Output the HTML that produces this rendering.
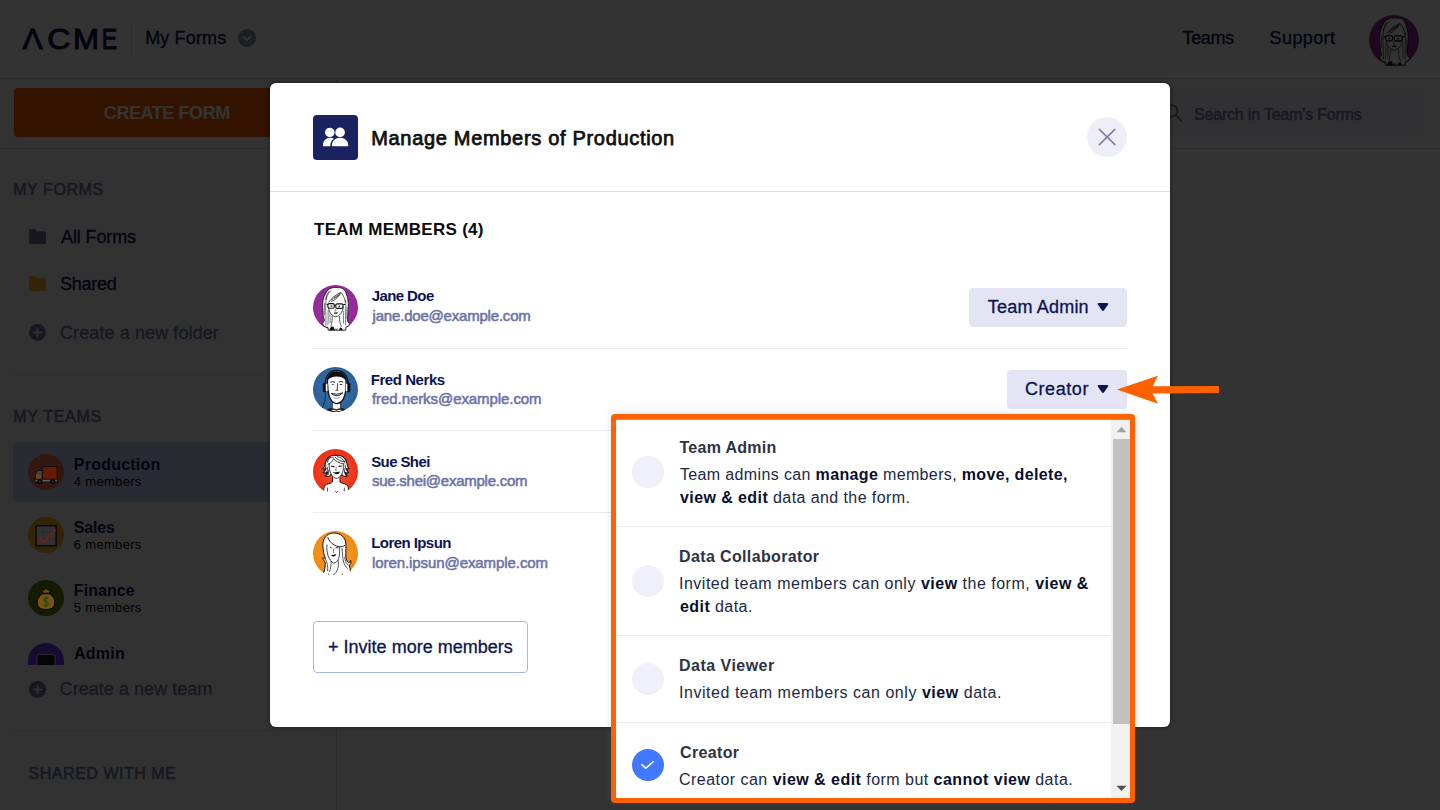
<!DOCTYPE html>
<html lang="en">
<head>
<meta charset="utf-8">
<title>Manage Members of Production</title>
<style>
*{box-sizing:border-box;margin:0;padding:0}
html,body{width:1440px;height:810px;overflow:hidden;background:#fff}
body{font-family:"Liberation Sans",Arial,sans-serif;color:#0a1551;position:relative}
.abs{position:absolute}
.t{position:absolute;white-space:nowrap;line-height:1}
/* ---------- page behind overlay ---------- */
#page{position:absolute;left:0;top:0;width:1440px;height:810px;background:#fff}
#hdr{position:absolute;left:0;top:0;width:1440px;height:79px;background:#fcfcff;border-bottom:1px solid #d6d7e4}

#hdiv{left:131px;top:19px;width:1px;height:39px;background:#dcdde8}
#myforms{left:146px;top:28px;font-size:18px;-webkit-text-stroke:.3px #0a1551}
#mfcirc{left:238px;top:29px;width:18px;height:18px;border-radius:50%;background:#8d8fa8}
#teams{left:1183px;top:28px;font-size:18px;-webkit-text-stroke:.3px #0a1551}
#support{left:1271px;top:28px;font-size:18px;-webkit-text-stroke:.3px #0a1551}
#uav{left:1369px;top:15px;width:50px;height:50px}
#side{position:absolute;left:0;top:79px;width:337px;height:731px;background:#fbfbff;border-right:1px solid #d2d3e2}
#cf{left:14px;top:88px;width:305px;height:49px;border-radius:4px;background:#ff6100}
#cft{left:104px;top:103px;font-size:18px;font-weight:bold;color:#fff}
#l148{left:0;top:148px;width:1440px;height:1px;background:#dadbe6}
.sh{font-size:16px;color:#6f76a7;font-weight:normal;-webkit-text-stroke:.55px #6f76a7}
.nav{font-size:18px;color:#0a1551;-webkit-text-stroke:.3px #0a1551}
.nav2{font-size:18px;color:#6f76a7;-webkit-text-stroke:.3px #6f76a7}
.hr{position:absolute;left:13px;width:309px;height:1px;background:#e6e7f0}
.tm{position:absolute;left:13px;width:311px;height:60px;border-radius:4px}
#icons{position:absolute;left:0;top:0}
.tc{position:absolute;left:28px;width:36px;height:36px;border-radius:50%;overflow:hidden}
.tn{font-size:16px;font-weight:bold;color:#0a1551;left:74px}
.tmm{font-size:13px;color:#000;left:74px}
#srch{left:1155px;top:88px;width:268px;height:49px;border-radius:4px;background:#f3f3fe}
#srcht{left:1194px;top:105px;font-size:16px;color:#777dab;font-weight:normal;-webkit-text-stroke:.6px #777dab}
/* ---------- overlay ---------- */
#ov{position:absolute;left:0;top:0;width:1440px;height:810px;background:rgba(0,0,0,.8)}
/* ---------- modal ---------- */
#modal{position:absolute;left:270px;top:83px;width:900px;height:644px;background:#fff;border-radius:6px;box-shadow:0 0 4px rgba(0,0,0,.5)}
#mico{left:43px;top:32px;width:45px;height:45px;border-radius:4px;background:#1a2260}
#mtitle{left:102px;top:44px;font-size:20px;font-weight:normal;color:#0f0f10;-webkit-text-stroke:.75px #0f0f10}
#mclose{left:817px;top:34px;width:40px;height:40px;border-radius:50%;background:#eeeef8}
#mhr{left:0;top:108px;width:900px;height:1px;background:#dcdcec}
#tmh{left:43px;top:138px;font-size:17px;font-weight:bold;color:#0a0a0a}
.av{position:absolute;left:43px;width:45px;height:45px}
.mn{left:102px;font-size:15px;font-weight:bold;color:#0a1551}
.me{left:102px;font-size:15px;font-weight:normal;color:#6c73a8;-webkit-text-stroke:.55px #6c73a8}
.msep{position:absolute;left:43px;width:814px;height:1px;background:#eaebf5}
.rb{position:absolute;height:39px;border-radius:4px;background:#e3e5f5}
.rbt{font-size:18px;color:#0a1551;-webkit-text-stroke:.3px #0a1551}
#inv{left:43px;top:538px;width:215px;height:52px;border:1px solid #a3b4e4;border-radius:4px;background:#fff}
#invt{left:58px;top:555px;font-size:18px;color:#0a1551;-webkit-text-stroke:.3px #0a1551}
/* ---------- dropdown ---------- */
#dd{position:absolute;left:611px;top:414px;width:524px;height:389px;border:5px solid #ff6100;border-radius:4px;background:#fff;overflow:hidden;box-shadow:0 0 9px rgba(90,100,150,.22)}
#ddl{left:0;top:0;width:514px;height:1px;background:rgba(60,80,100,.55)}
.it{position:absolute;left:0;width:495px;border-bottom:1px solid #e9eaf3}
.rad{position:absolute;left:15.7px;width:32.6px;height:32.6px;border-radius:50%;background:#eff0fa}
.il{font-size:16px;font-weight:bold;color:#2c3345;left:64px}
.idl{font-size:16px;color:#212845;left:64px}
.idl b{color:#0a0f2c}
#sbt{left:495px;top:0;width:19px;height:379px;background:#f1f1f1}
#sbth{left:497px;top:20px;width:17px;height:285px;background:#c1c1c1}
/*TUNE*/
#myforms{left:145.20px;top:29.00px;letter-spacing:0.145px}
#teams{left:1182.60px;top:29.00px;letter-spacing:-0.400px}
#support{left:1269.60px;top:29.00px;letter-spacing:0.395px}
#cft{left:103.80px;top:104.00px;letter-spacing:-0.420px}
#srcht{left:1194.00px;top:107.00px;letter-spacing:-0.190px}
#h_myforms{left:13.20px;top:182.00px;letter-spacing:0.573px}
#n_all{left:61.00px;top:228.00px;letter-spacing:-0.125px}
#n_shared{left:60.00px;top:275.00px;letter-spacing:-0.240px}
#n_newf{left:60.00px;top:324.00px;letter-spacing:0.099px}
#h_myteams{left:13.20px;top:409.00px;letter-spacing:0.717px}
#tn1{left:73.80px;top:457.00px;letter-spacing:0.222px}
#tm1{left:73.80px;top:475.00px;letter-spacing:0.312px}
#tn2{left:73.80px;top:520.00px;letter-spacing:-0.150px}
#tm2{left:73.80px;top:538.00px;letter-spacing:0.312px}
#tn3{left:73.80px;top:583.00px;letter-spacing:0.070px}
#tm3{left:73.80px;top:601.00px;letter-spacing:0.312px}
#tn4{left:74.00px;top:646.00px;letter-spacing:0.250px}
#n_newt{left:59.60px;top:680.00px;letter-spacing:0.043px}
#h_shared{left:28.60px;top:766.00px;letter-spacing:0.525px}
#mtitle{left:101.20px;top:45.00px;letter-spacing:0.683px}
#tmh{left:44.00px;top:138.00px;letter-spacing:0.282px}
#mn1{left:101.70px;top:205.00px;letter-spacing:-0.585px}
#me1{left:102.60px;top:225.00px;letter-spacing:-0.198px}
#mn2{left:100.70px;top:289.00px;letter-spacing:-0.431px}
#me2{left:102.00px;top:308.00px;letter-spacing:-0.072px}
#mn3{left:101.20px;top:371.00px;letter-spacing:-0.599px}
#me3{left:102.00px;top:390.00px;letter-spacing:-0.250px}
#mn4{left:101.20px;top:452.00px;letter-spacing:-0.560px}
#me4{left:102.00px;top:472.00px;letter-spacing:-0.078px}
#rbt1{left:717.80px;top:215.00px;letter-spacing:0.196px}
#rbt2{left:755.00px;top:297.00px;letter-spacing:0.562px}
#invt{left:58.00px;top:555.00px;letter-spacing:0.010px}
#il1{left:63.40px;top:21.00px;letter-spacing:0.306px}
#d1a{left:64.00px;top:48.00px;letter-spacing:0.357px}
#d1b{left:64.00px;top:71.00px;letter-spacing:0.416px}
#il2{left:63.00px;top:130.00px;letter-spacing:0.366px}
#d2a{left:63.00px;top:157.00px;letter-spacing:0.504px}
#d2b{left:64.00px;top:180.00px;letter-spacing:0.429px}
#il3{left:63.00px;top:239.00px;letter-spacing:0.480px}
#d3a{left:63.00px;top:266.00px;letter-spacing:0.538px}
#il4{left:64.00px;top:326.00px;letter-spacing:0.364px}
#d4a{left:63.00px;top:353.00px;letter-spacing:0.466px}
/*END*/
</style>
</head>
<body>
<svg width="0" height="0" style="position:absolute">
 <defs>
  <radialGradient id="gJ" cx="50%" cy="50%" r="50%"><stop offset="0" stop-color="#a43aa6"/><stop offset="1" stop-color="#94289a"/></radialGradient>
  <radialGradient id="gF" cx="50%" cy="50%" r="50%"><stop offset="0" stop-color="#3d77ae"/><stop offset="1" stop-color="#2a609a"/></radialGradient>
  <radialGradient id="gS" cx="50%" cy="50%" r="50%"><stop offset="0" stop-color="#f6553a"/><stop offset="1" stop-color="#ee3013"/></radialGradient>
  <radialGradient id="gL" cx="50%" cy="50%" r="50%"><stop offset="0" stop-color="#f7a030"/><stop offset="1" stop-color="#ef8a12"/></radialGradient>
  
 </defs>
</svg>
<div id="page">
  <div id="hdr">
    <svg class="abs" id="logo" style="left:0;top:0" width="130" height="78" viewBox="0 0 130 78"><text font-family="Liberation Sans, Arial, sans-serif" font-size="29.4" fill="#0a1551" stroke="#0a1551" stroke-width="1" y="49.1"><tspan x="22.4" textLength="20.2" lengthAdjust="spacingAndGlyphs">Λ</tspan><tspan x="47.2" textLength="23.2" lengthAdjust="spacingAndGlyphs">C</tspan><tspan x="73" textLength="26" lengthAdjust="spacingAndGlyphs">M</tspan><tspan x="101.8" textLength="15.4" lengthAdjust="spacingAndGlyphs">E</tspan></text></svg>
    <div class="abs" id="hdiv"></div>
    <div class="t" id="myforms">My Forms</div>
    <div class="abs" id="mfcirc"><svg width="18" height="18" viewBox="0 0 18 18"><path d="M5.4 7.6 L9 11 L12.6 7.6" fill="none" stroke="#fff" stroke-width="1.8" stroke-linecap="round" stroke-linejoin="round"/></svg></div>
    <div class="t" id="teams">Teams</div>
    <div class="t" id="support">Support</div>
    <div class="abs" id="uav"><svg width="50" height="50" viewBox="0 0 45 45" style="overflow:visible">
   <circle cx="22.5" cy="22.5" r="22.5" fill="url(#gJ)"/>
   <path d="M10.3 40.8 L9.6 38.2 C10.8 36.8 11.3 35.8 11.3 35 C10.2 31.6 9.9 29 10 27.6 C9.6 24 9.5 21 9.7 18.4 C10 14.5 10.6 12.4 11.6 10.3 C13 7 14.6 5.2 16.5 3.9 C19 2.4 22 2.3 24.5 2.6 C26.5 2.6 28.6 2.8 30.1 3.6 C32 5 33 7.6 33.8 10.3 C34.8 13 35.2 16 35.3 18.4 C35.4 22 35.2 25 35 27.6 C34.8 30.6 34.5 33 34.4 35 C34.6 36.6 35.6 38 36.8 38.8 L35.4 41.2 L32.8 42.2 L32.8 45.2 L15.2 45.2 L15 42.6 L12.2 41.8 Z" fill="#fff" stroke="#141414" stroke-width=".9" stroke-linejoin="round"/>
   <path d="M12.8 40.6 C13.4 33 12.2 25 12.8 17 C13.2 12 15 8 18.4 5.4 M14.8 40.4 C15.6 34 14.8 29 15.2 25.4 M17 38 C17.4 34 16.8 31 17 28.4 M30.6 38.6 C30.2 33 30.8 29.5 30.6 26 M32.6 40.4 C32 32 33.4 24 32.6 15 M34 34 C33.6 30 34.2 26 34 22 M11.4 30 C11.2 26 11.2 22 11.6 18" fill="none" stroke="#222" stroke-width=".6"/>
   <path d="M15.6 22.8 C15.8 27.4 19 31.2 22.6 31.8 C26 31.4 30 27.4 30.2 21.6" fill="none" stroke="#1a1a1a" stroke-width=".8"/>
   <path d="M15.4 17.4 C18.4 13.6 22.6 9.4 27.8 7.4 C26.4 11.6 22.6 14.8 18.2 16.6 M20.6 12.6 C23 11.6 25.6 10 27.2 8.4 M18.4 15 C21 13.6 24 12 26.4 9.6 M28.2 7.8 C30.6 10.6 32 14 32.4 17.6 M16 6.4 C14 9 13 12 12.8 15" fill="none" stroke="#1a1a1a" stroke-width=".7"/>
   <path d="M13.6 19.2 L15.4 19.6 M21.4 20.2 L22.8 20.2 M30.2 19.8 L32.4 19.2" fill="none" stroke="#111" stroke-width="1.1"/>
   <rect x="14.9" y="18.6" width="6.4" height="4.6" rx="1.5" fill="#fff" stroke="#111" stroke-width="1.15"/>
   <rect x="22.8" y="18.8" width="7.2" height="4.6" rx="1.5" fill="#fff" stroke="#111" stroke-width="1.15"/>
   <ellipse cx="18.4" cy="21" rx="1.1" ry=".8" fill="#222"/><ellipse cx="26.2" cy="21.2" rx="1.1" ry=".8" fill="#222"/>
   <path d="M21 28 Q22.6 29.4 24.6 27.8 Q22.8 27.4 21 28 Z" fill="#111" stroke="#111" stroke-width=".5"/>
   <path d="M22.6 24 L22 26 L23.2 26.2" fill="none" stroke="#333" stroke-width=".5"/>
   <path d="M19.2 31 C19.4 35 18.8 39 17.8 41.4 M26.4 31 C26.4 35 27 39 28.4 41.4" fill="none" stroke="#1a1a1a" stroke-width=".7"/>
   <path d="M16.4 45.2 C16.8 42.4 18.6 41 20.4 41.8 L22 45.2 Z M29.6 45.2 C29.4 43 28 42 26.8 42.8 L26 45.2 Z" fill="#111"/>
   <path d="M22.8 43.4 L23.4 45 L24.2 43.6" fill="none" stroke="#111" stroke-width=".6"/>
  </svg></div>
  </div>
  <div id="side"></div>
  <div class="abs" id="cf"></div>
  <div class="t" id="cft">CREATE FORM</div>
  <div class="abs" id="l148"></div>
  <div class="abs" id="srch"></div>
  <svg class="abs" id="srchi" style="left:1164px;top:103px" width="20" height="20" viewBox="0 0 20 20"><circle cx="8" cy="8" r="5.6" fill="none" stroke="#6f76a7" stroke-width="1.8"/><path d="M12.2 12.4 L17 17.4" stroke="#6f76a7" stroke-width="1.9" stroke-linecap="round"/></svg>
  <div class="t" id="srcht">Search in Team's Forms</div>
  <div class="t sh" id="h_myforms">MY FORMS</div>
  <svg class="abs" id="fo1" style="left:29px;top:229px" width="17" height="15" viewBox="0 0 17 15"><path d="M1.5 0 H6.2 L8 2.2 H15.5 Q17 2.2 17 3.7 V13.5 Q17 15 15.5 15 H1.5 Q0 15 0 13.5 V1.5 Q0 0 1.5 0Z" fill="#6f76a7"/></svg>
  <div class="t nav" id="n_all">All Forms</div>
  <svg class="abs" id="fo2" style="left:29px;top:276px" width="17" height="15" viewBox="0 0 17 15"><path d="M1.5 0 H6.2 L8 2.2 H15.5 Q17 2.2 17 3.7 V13.5 Q17 15 15.5 15 H1.5 Q0 15 0 13.5 V1.5 Q0 0 1.5 0Z" fill="#ffb629"/></svg>
  <div class="t nav" id="n_shared">Shared</div>
  <svg class="abs" id="pl1" style="left:29px;top:324px" width="17" height="17" viewBox="0 0 17 17"><circle cx="8.5" cy="8.5" r="8.5" fill="#6f76a7"/><path d="M8.5 4.6 V12.4 M4.6 8.5 H12.4" stroke="#fff" stroke-width="1.7" stroke-linecap="round"/></svg>
  <div class="t nav2" id="n_newf">Create a new folder</div>
  <div class="hr" style="top:374px"></div>
  <div class="t sh" id="h_myteams">MY TEAMS</div>
  <div class="tm" style="top:442px;background:#cdd7ff"></div>
  <div class="tc" id="tc1" style="top:454px;background:#ff7b5c"></div>
  <div class="t tn" id="tn1">Production</div>
  <div class="t tmm" id="tm1">4 members</div>
  <div class="tc" id="tc2" style="top:517px;background:#ffb629"></div>
  <div class="t tn" id="tn2">Sales</div>
  <div class="t tmm" id="tm2">6 members</div>
  <div class="tc" id="tc3" style="top:580px;background:#5f8a0f"></div>
  <div class="t tn" id="tn3">Finance</div>
  <div class="t tmm" id="tm3">5 members</div>
  <div class="tc" id="tc4" style="top:643px;height:22px;border-radius:18px 18px 0 0;background:#7b3af5"></div>
  <div class="t tn" id="tn4">Admin</div>
  <svg class="abs" id="pl2" style="left:29px;top:681px" width="17" height="17" viewBox="0 0 17 17"><circle cx="8.5" cy="8.5" r="8.5" fill="#6f76a7"/><path d="M8.5 4.6 V12.4 M4.6 8.5 H12.4" stroke="#fff" stroke-width="1.7" stroke-linecap="round"/></svg>
  <div class="t nav2" id="n_newt">Create a new team</div>
  <div class="hr" style="top:730px"></div>
  <div class="t sh" id="h_shared">SHARED WITH ME</div>
</div>
<div id="ov"></div>
<div id="icons">
  <svg class="abs" style="left:28px;top:454px" width="36" height="36" viewBox="0 0 36 36">
    <rect x="14.2" y="12.6" width="15" height="13" fill="#651a06" stroke="#0c0c0c" stroke-width="1"/>
    <path d="M7.4 25.4 V20.4 L9.6 16.6 H14.2 V25.4 Z" fill="#6e4a0e" stroke="#0c0c0c" stroke-width="1" stroke-linejoin="round"/>
    <path d="M9 20.6 L10.4 17.6 H13.2 V20.6 Z" fill="#29435c"/>
    <rect x="7" y="25.2" width="22.6" height="2.8" fill="#5c5c60" stroke="#0c0c0c" stroke-width=".8"/>
    <circle cx="11.8" cy="27.6" r="2.7" fill="#0a0a0a"/><circle cx="24.6" cy="27.6" r="2.7" fill="#0a0a0a"/>
    <circle cx="11.8" cy="27.6" r=".9" fill="#3a3a3a"/><circle cx="24.6" cy="27.6" r=".9" fill="#3a3a3a"/>
  </svg>
  <svg class="abs" style="left:28px;top:517px" width="36" height="36" viewBox="0 0 36 36">
    <rect x="8.1" y="8.8" width="20" height="20" fill="#323235" stroke="#0b0a0a" stroke-width="1.5"/>
    <path d="M14.8 9.6 V28 M21.6 9.6 V28 M8.9 15.4 H27.4 M8.9 22 H27.4" stroke="#2a2a33" stroke-width=".7"/>
    <path d="M9.3 25.6 L12.6 21.6 L15.6 25.2 L27.8 12.6" fill="none" stroke="#7e1b0a" stroke-width="1.5" stroke-linejoin="round"/>
  </svg>
  <svg class="abs" style="left:28px;top:580px" width="36" height="36" viewBox="0 0 36 36">
    <path d="M13.4 8.6 L15.6 10.6 L18 8.4 L20.4 10.6 L22.8 8.6 L21.4 13.4 H14.8 Z" fill="#7a5312" stroke="#0c0a06" stroke-width="1" stroke-linejoin="round"/>
    <path d="M14.6 13.6 C10 16.4 8.6 21 9.4 24.6 C10.2 28 13.6 29.6 18 29.6 C22.4 29.6 25.8 28 26.6 24.6 C27.4 21 26 16.4 21.6 13.6 Z" fill="#7a5312" stroke="#0c0a06" stroke-width="1.1"/>
    <path d="M14.4 13.4 H21.8" stroke="#0c0a06" stroke-width="1.4"/>
    <path d="M20.4 18.6 C19 17.2 15.8 17.6 15.8 19.8 C15.8 22.2 20.4 21.4 20.4 23.8 C20.4 26 17 26.2 15.4 24.6 M18 16 V27.6" fill="none" stroke="#1c4a22" stroke-width="1.3"/>
  </svg>
  <svg class="abs" style="left:28px;top:643px" width="36" height="22" viewBox="0 0 36 22">
    <rect x="9" y="11.4" width="18" height="12" rx="2" fill="#060505" stroke="#2e2a2a" stroke-width="1"/>
  </svg>
</div>
<div id="modal">
  <div class="abs" id="mico"><svg width="45" height="45" viewBox="0 0 45 45"><g fill="#fff"><circle cx="16.8" cy="17.4" r="4.75"/><circle cx="27.1" cy="17.4" r="4.8"/><path d="M9.9 30.4 C9.9 26 13 22.7 17.2 22.7 C18.7 22.7 20 23.1 21 23.7 C18.6 25.2 17.3 27.6 17.3 30.4 V31.2 H10.7 Q9.9 31.2 9.9 30.4Z"/><path d="M18.9 30.4 C18.9 26 22.4 22.7 27.1 22.7 C31.8 22.7 35.3 26 35.3 30.4 Q35.3 31.2 34.5 31.2 H19.7 Q18.9 31.2 18.9 30.4 Z" stroke="#1a2260" stroke-width="1.3" paint-order="stroke"/></g></svg></div>
  <div class="t" id="mtitle">Manage Members of Production</div>
  <div class="abs" id="mclose"><svg width="40" height="40" viewBox="0 0 40 40"><path d="M12.4 12.4 L27.9 27.6 M27.9 12.4 L12.4 27.6" stroke="#8677a8" stroke-width="1.5" stroke-linecap="round"/></svg></div>
  <div class="abs" id="mhr"></div>
  <div class="t" id="tmh">TEAM MEMBERS (4)</div>
  <div class="av" id="av1" style="top:202px"><svg width="45" height="45" viewBox="0 0 45 45" style="overflow:visible">
   <circle cx="22.5" cy="22.5" r="22.5" fill="url(#gJ)"/>
   <path d="M10.3 40.8 L9.6 38.2 C10.8 36.8 11.3 35.8 11.3 35 C10.2 31.6 9.9 29 10 27.6 C9.6 24 9.5 21 9.7 18.4 C10 14.5 10.6 12.4 11.6 10.3 C13 7 14.6 5.2 16.5 3.9 C19 2.4 22 2.3 24.5 2.6 C26.5 2.6 28.6 2.8 30.1 3.6 C32 5 33 7.6 33.8 10.3 C34.8 13 35.2 16 35.3 18.4 C35.4 22 35.2 25 35 27.6 C34.8 30.6 34.5 33 34.4 35 C34.6 36.6 35.6 38 36.8 38.8 L35.4 41.2 L32.8 42.2 L32.8 45.2 L15.2 45.2 L15 42.6 L12.2 41.8 Z" fill="#fff" stroke="#141414" stroke-width=".9" stroke-linejoin="round"/>
   <path d="M12.8 40.6 C13.4 33 12.2 25 12.8 17 C13.2 12 15 8 18.4 5.4 M14.8 40.4 C15.6 34 14.8 29 15.2 25.4 M17 38 C17.4 34 16.8 31 17 28.4 M30.6 38.6 C30.2 33 30.8 29.5 30.6 26 M32.6 40.4 C32 32 33.4 24 32.6 15 M34 34 C33.6 30 34.2 26 34 22 M11.4 30 C11.2 26 11.2 22 11.6 18" fill="none" stroke="#222" stroke-width=".6"/>
   <path d="M15.6 22.8 C15.8 27.4 19 31.2 22.6 31.8 C26 31.4 30 27.4 30.2 21.6" fill="none" stroke="#1a1a1a" stroke-width=".8"/>
   <path d="M15.4 17.4 C18.4 13.6 22.6 9.4 27.8 7.4 C26.4 11.6 22.6 14.8 18.2 16.6 M20.6 12.6 C23 11.6 25.6 10 27.2 8.4 M18.4 15 C21 13.6 24 12 26.4 9.6 M28.2 7.8 C30.6 10.6 32 14 32.4 17.6 M16 6.4 C14 9 13 12 12.8 15" fill="none" stroke="#1a1a1a" stroke-width=".7"/>
   <path d="M13.6 19.2 L15.4 19.6 M21.4 20.2 L22.8 20.2 M30.2 19.8 L32.4 19.2" fill="none" stroke="#111" stroke-width="1.1"/>
   <rect x="14.9" y="18.6" width="6.4" height="4.6" rx="1.5" fill="#fff" stroke="#111" stroke-width="1.15"/>
   <rect x="22.8" y="18.8" width="7.2" height="4.6" rx="1.5" fill="#fff" stroke="#111" stroke-width="1.15"/>
   <ellipse cx="18.4" cy="21" rx="1.1" ry=".8" fill="#222"/><ellipse cx="26.2" cy="21.2" rx="1.1" ry=".8" fill="#222"/>
   <path d="M21 28 Q22.6 29.4 24.6 27.8 Q22.8 27.4 21 28 Z" fill="#111" stroke="#111" stroke-width=".5"/>
   <path d="M22.6 24 L22 26 L23.2 26.2" fill="none" stroke="#333" stroke-width=".5"/>
   <path d="M19.2 31 C19.4 35 18.8 39 17.8 41.4 M26.4 31 C26.4 35 27 39 28.4 41.4" fill="none" stroke="#1a1a1a" stroke-width=".7"/>
   <path d="M16.4 45.2 C16.8 42.4 18.6 41 20.4 41.8 L22 45.2 Z M29.6 45.2 C29.4 43 28 42 26.8 42.8 L26 45.2 Z" fill="#111"/>
   <path d="M22.8 43.4 L23.4 45 L24.2 43.6" fill="none" stroke="#111" stroke-width=".6"/>
  </svg></div>
  <div class="t mn" id="mn1">Jane Doe</div>
  <div class="t me" id="me1">jane.doe@example.com</div>
  <div class="msep" style="top:265px"></div>
  <div class="av" id="av2" style="top:284px"><svg width="45" height="45" viewBox="0 0 45 45"><defs><clipPath id="c2"><circle cx="22.5" cy="22.5" r="22.5"/></clipPath></defs>
   <circle cx="22.5" cy="22.5" r="22.5" fill="url(#gF)"/>
   <g clip-path="url(#c2)">
   <path d="M12 46 C13 42.5 16 41.2 19.6 40.8 L27 40.8 C30.6 41.2 33.6 42.5 35 46 Z" fill="#111"/>
   <path d="M19.4 35 L19.2 41.6 Q23.2 43.6 27.6 41.6 L27.6 35 Z" fill="#fff" stroke="#111" stroke-width=".8"/>
   <path d="M18.6 43 Q23.4 45 28.4 43" fill="none" stroke="#fff" stroke-width="1"/>
   </g>
   <path d="M14.6 12 C14.2 18 14.6 24 16.4 29.6 C17.8 33.6 20.4 36.4 23.6 36.6 C27 36.4 30.2 33.4 31.6 29 C33 24 33.4 17.6 32.8 12 C31 8.2 27 7 23.6 7 C20 7 16.4 8.4 14.6 12 Z" fill="#fff" stroke="#111" stroke-width="1.3"/>
   <path d="M14.4 13.4 C14.4 8 18 4.6 23.6 4.6 C29.4 4.6 33 8 33 13.4 C30 10.2 27 9.4 23.6 9.4 C20 9.4 17.2 10.4 14.4 13.4 Z" fill="#111"/>
   <path d="M12.2 19 C11.6 10 16 3.4 23.6 3.4 C31.4 3.4 35.6 10 35 19" fill="none" stroke="#111" stroke-width="1.3"/>
   <rect x="9.8" y="15.6" width="3.6" height="10" rx="1.8" fill="#111"/><rect x="33.8" y="15.6" width="3.6" height="10" rx="1.8" fill="#111"/>
   <rect x="12.6" y="16.6" width="2.2" height="8" rx="1" fill="#fff" stroke="#111" stroke-width=".5"/><rect x="32.4" y="16.6" width="2.2" height="8" rx="1" fill="#fff" stroke="#111" stroke-width=".5"/>
   <path d="M12.6 25.6 C12.2 30 12.4 33.6 11 36.6 C10.4 38 10.2 39.4 9.4 40.8" fill="none" stroke="#111" stroke-width=".7"/>
   <path d="M17.4 15.4 Q19.6 14 22 15.2 M25.6 15 Q27.8 13.8 30.2 15.2" fill="none" stroke="#111" stroke-width=".9"/>
   <path d="M18.2 17.8 Q19.8 16.8 21.6 17.8 Q19.8 18.6 18.2 17.8 Z M26.2 17.6 Q27.8 16.4 29.6 17.4 Q27.8 18.4 26.2 17.6 Z" fill="#111"/>
   <path d="M24.6 16.4 L24.2 23 L22.4 23.4 M24.2 23 L25.4 23.4" fill="none" stroke="#111" stroke-width=".8"/>
   <path d="M18.2 26.4 Q23.6 28.4 29.8 25.8 Q24 31.4 18.2 26.4 Z" fill="#fff" stroke="#111" stroke-width=".9" stroke-linejoin="round"/>
   <path d="M20.4 30.8 Q23.6 32 26.8 30.6" fill="none" stroke="#333" stroke-width=".5"/>
  </svg></div>
  <div class="t mn" id="mn2">Fred Nerks</div>
  <div class="t me" id="me2">fred.nerks@example.com</div>
  <div class="msep" style="top:347px"></div>
  <div class="av" id="av3" style="top:366px"><svg width="45" height="45" viewBox="0 0 45 45" style="overflow:visible">
   <circle cx="22.5" cy="22.5" r="22.5" fill="url(#gS)"/>
   <path d="M10.6 41.6 C10.6 38 11.6 36 13.6 35.4 C16.4 34.6 18.6 34 19.4 33 L19.6 27 L27 27 L27 33 C28 34 30.6 34.6 33 35.4 C35 36 35.6 38 35.6 41.2 L33.4 44 L29 46 L17 46 L12.6 44 Z" fill="#fff"/>
   <path d="M10.8 41.4 C10.8 38 11.6 36 13.6 35.4 C16.4 34.6 18.6 34 19.4 33 L19.6 28 M27 28 L27 33 C28 34 30.6 34.6 33 35.4 C35 36 35.4 38 35.4 41" fill="none" stroke="#111" stroke-width=".9" stroke-linejoin="round"/>
   <path d="M14.4 38.6 L14.6 42.6 M31.4 38.6 L31.2 42.6 M22.2 42 L23.6 43.6 L24.6 42" fill="none" stroke="#111" stroke-width=".7"/>
   <path d="M22.8 6.4 C18 5.6 13.6 8.4 12.6 13 C12.4 15.6 12.2 17.6 9.6 19.6 C11.2 20.4 12.2 20 13 19.4 C12.4 21.6 11.6 22.6 10 23.6 C12 24.6 13.6 24 14.6 23 C14.4 25 13.6 26.4 12.4 27.2 C15 28 17.4 27 18.4 25 L28.4 25 C29.6 27.2 31.6 28 34 27.2 C32.6 26.2 32 25 32 23.2 C33 24.2 34.4 24.4 35.6 23.6 C34 22.4 33.6 21 33.6 19.4 C34.4 20 35.2 20 36 19.4 C34 17.6 34.2 15.6 33.6 13 C32.6 8.6 28 5.6 22.8 6.4 Z" fill="#fff" stroke="#111" stroke-width="1.1" stroke-linejoin="round"/>
   <path d="M16.2 14 C16 19 16.6 23.6 19 26.6 C20.4 28.4 22 29.4 23.4 29.4 C25 29.4 27 28.2 28.4 26 C30.4 23 30.6 18.6 30.2 14.6" fill="#fff" stroke="#111" stroke-width=".8"/>
   <path d="M14.6 15.6 C17 14.6 19.4 12.6 20.6 9.6 C22 12 26 14.2 31.6 15 M24 7.6 C27 8 30.6 10 32 13.6 M13.6 12 C15 9.6 18 8 20.6 8 M22 8 C24 10.6 28 12.6 32.4 13 M13 16 C12.8 18.6 12 20.6 10.6 21.6 M14.4 18 C14.6 21 14 23.4 12.6 25 M15.6 21 C15.8 23.6 15.4 25.4 14.6 26.4 M32.2 16 C32.2 18.6 33 20.6 34.6 21.8 M31.2 19 C31 22 31.8 24.4 33.2 25.6 M17.6 7.8 C15.8 9.4 14.8 11.4 14.4 13.6" fill="none" stroke="#111" stroke-width=".8"/>
   <path d="M18.2 17.4 L21.4 17.6 M25.6 17.4 L28.8 17" fill="none" stroke="#111" stroke-width="1.1"/>
   <path d="M23.4 18 L22.6 21.4 L23.8 21.8" fill="none" stroke="#222" stroke-width=".6"/>
   <path d="M19.6 23 Q23.4 23.6 27.4 22.4 Q24.4 27.6 19.6 23 Z" fill="#111"/>
  </svg></div>
  <div class="t mn" id="mn3">Sue Shei</div>
  <div class="t me" id="me3">sue.shei@example.com</div>
  <div class="msep" style="top:429px"></div>
  <div class="av" id="av4" style="top:448px"><svg width="45" height="45" viewBox="0 0 45 45" style="overflow:visible">
   <circle cx="22.5" cy="22.5" r="22.5" fill="url(#gL)"/>
   <path d="M10.4 42 C12 38 12.6 34 12 30.6 C10.6 29.6 9.6 28.2 10 26.6 C10.8 27.6 11.6 27.8 12.4 27.6 C11 24 10 19.6 9.8 14.6 C9.6 8 13.6 2.6 19.6 2 C25.6 1.6 31 4.6 32.4 10 C33.6 15 32.6 20 32.8 25 C33 28 34 30.4 35.4 31.6 C36.6 31.4 37.4 30.6 37.6 29.4 C38.6 31.6 37.6 33.6 36 34.6 C37 36.6 37.4 38.6 37.2 40.4 L34 43.4 L29 46 L16 46 L12.6 44 Z" fill="#fff"/>
   <path d="M10.6 41.8 C12 38 12.6 34 12 30.6 C10.6 29.6 9.6 28.2 10 26.6 C10.8 27.6 11.6 27.8 12.4 27.6 C11 24 10 19.6 9.8 14.6 C9.6 8 13.6 2.6 19.6 2 C25.6 1.6 31 4.6 32.4 10 C33.6 15 32.6 20 32.8 25 C33 28 34 30.4 35.4 31.6 C36.6 31.4 37.4 30.6 37.6 29.4 C38.6 31.6 37.6 33.6 36 34.6 C37 36.6 37.4 38.6 37.2 40.2" fill="none" stroke="#111" stroke-width="1" stroke-linejoin="round"/>
   <path d="M14.8 6 C15.6 10 19.6 14.4 26 15.6 C28.6 16 30.6 15.4 32 14.2" fill="none" stroke="#111" stroke-width=".9"/>
   <path d="M14 13.6 C13.4 18 14 22 15.4 25.6 C16.6 28.4 18.6 31 20.6 32.2 C22.6 32 24.6 30 25.6 27.6 C26.6 25 26.8 21 26.6 16" fill="none" stroke="#111" stroke-width=".8"/>
   <path d="M12.4 28 C14 31 15 35 14.6 40 M18 30.4 C18.4 34 17.6 38 16.4 41 M25 29 C26 33 25.6 37.6 23 41.6 C22 43 21 43.4 20 43.4 M29 17 C29.6 22 29.4 27 30.6 31 C31.4 34 33 36 34.6 37.6 M31.6 26 C32 30 33.6 33 35.4 34.4" fill="none" stroke="#111" stroke-width=".7"/>
   <path d="M16.6 16.6 Q18 15.8 19.6 16.8 Q18 17.8 16.6 16.6 Z" fill="#111"/>
   <path d="M22.6 17 Q24 16.2 25.4 16.8" fill="none" stroke="#111" stroke-width=".9"/>
   <path d="M20.8 17.6 L20.2 21.4 L21.4 21.8" fill="none" stroke="#222" stroke-width=".6"/>
   <path d="M17.8 24 Q20.6 24 23.4 23 Q21.6 27.6 17.8 24 Z" fill="#111"/>
   <path d="M15.6 42.6 L15.8 44 M29.2 42.6 L29.4 44" fill="none" stroke="#111" stroke-width=".7"/>
  </svg></div>
  <div class="t mn" id="mn4">Loren Ipsun</div>
  <div class="t me" id="me4">loren.ipsun@example.com</div>
  <div class="rb" id="rb1" style="left:699px;top:205px;width:158px"></div>
  <div class="t rbt" id="rbt1">Team Admin</div>
  <svg class="abs" style="left:826.9px;top:219.9px" width="12" height="9" viewBox="-0.4 0 12 9"><path d="M1.8 0 H9.3 Q11.7 0 10.5 1.8 L6.7 7.3 Q5.55 8.8 4.4 7.3 L0.6 1.8 Q-0.6 0 1.8 0Z" fill="#0a1551"/></svg>
  <div class="rb" id="rb2" style="left:737px;top:287px;width:120px"></div>
  <div class="t rbt" id="rbt2">Creator</div>
  <svg class="abs" style="left:826.9px;top:301.9px" width="12" height="9" viewBox="-0.4 0 12 9"><path d="M1.8 0 H9.3 Q11.7 0 10.5 1.8 L6.7 7.3 Q5.55 8.8 4.4 7.3 L0.6 1.8 Q-0.6 0 1.8 0Z" fill="#0a1551"/></svg>
  <div class="abs" id="inv"></div>
  <div class="t" id="invt">+ Invite more members</div>
</div>
<svg class="abs" id="arrow" style="left:1110px;top:370px" width="115" height="40" viewBox="0 0 115 40"><path d="M6.9 19.5 L48 5.8 L42.7 16.2 L108.9 16 L108.9 23 L42.7 23.6 L48 33.8 Z" fill="#ff6100"/></svg>
<div id="dd">
  <div class="it" style="top:0;height:108px"></div>
  <div class="rad" style="top:36.7px"></div>
  <div class="t il" id="il1">Team Admin</div>
  <div class="t idl" id="d1a">Team admins can <b>manage</b> members, <b>move, delete,</b></div>
  <div class="t idl" id="d1b"><b>view &amp; edit</b> data and the form.</div>
  <div class="it" style="top:108px;height:109px"></div>
  <div class="rad" style="top:145.9px"></div>
  <div class="t il" id="il2">Data Collaborator</div>
  <div class="t idl" id="d2a">Invited team members can only <b>view</b> the form, <b>view &amp;</b></div>
  <div class="t idl" id="d2b"><b>edit</b> data.</div>
  <div class="it" style="top:217px;height:87px"></div>
  <div class="rad" style="top:243.5px"></div>
  <div class="t il" id="il3">Data Viewer</div>
  <div class="t idl" id="d3a">Invited team members can only <b>view</b> data.</div>
  <div class="rad" id="radsel" style="left:16px;top:330.4px;width:32px;height:32px;background:#4277ff"><svg width="32" height="32" viewBox="0.4 0.2 32.6 32.6" style="display:block"><path d="M10.5 16.1 L14.3 19.9 L22.3 12.9" fill="none" stroke="#fff" stroke-width="1.5" stroke-linecap="round" stroke-linejoin="round"/></svg></div>
  <div class="t il" id="il4">Creator</div>
  <div class="t idl" id="d4a">Creator can <b>view &amp; edit</b> form but <b>cannot view</b> data.</div>
  <div class="abs" id="sbt"></div>
  <div class="abs" id="ddl"></div>
  <div class="abs" id="sbth"></div>
  <svg class="abs" style="left:500px;top:6.6px" width="11" height="7" viewBox="0 0 11 7"><path d="M0.7 6.3 L5.5 0.8 L10.3 6.3Z" fill="#a3a3a3"/></svg>
  <svg class="abs" style="left:500px;top:366px" width="11" height="7" viewBox="0 0 11 7"><path d="M0.5 0.8 L5.5 6 L10.5 0.8Z" fill="#505050"/></svg>
</div>
</body>
</html>
